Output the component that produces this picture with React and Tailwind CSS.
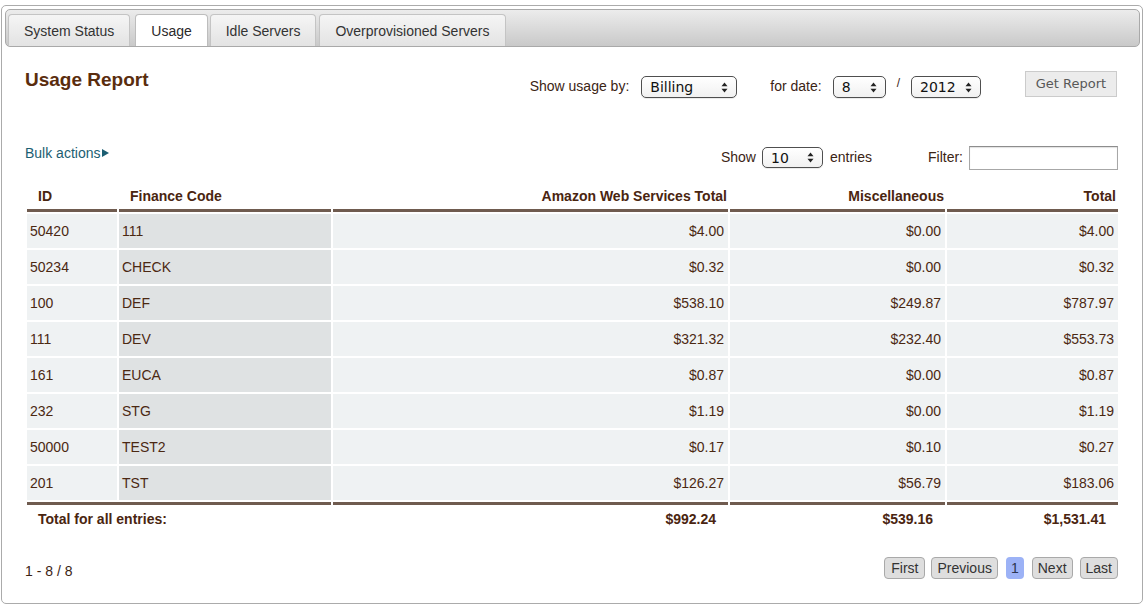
import React from "react";

const rows = [
  ["50420", "111", "$4.00", "$0.00", "$4.00"],
  ["50234", "CHECK", "$0.32", "$0.00", "$0.32"],
  ["100", "DEF", "$538.10", "$249.87", "$787.97"],
  ["111", "DEV", "$321.32", "$232.40", "$553.73"],
  ["161", "EUCA", "$0.87", "$0.00", "$0.87"],
  ["232", "STG", "$1.19", "$0.00", "$1.19"],
  ["50000", "TEST2", "$0.17", "$0.10", "$0.27"],
  ["201", "TST", "$126.27", "$56.79", "$183.06"],
];

function Arrows() {
  return (
    <svg width="7" height="11" viewBox="0 0 7 11" className="shrink-0">
      <path d="M3.5 0.5 L6.5 4.2 L0.5 4.2 Z" fill="#222" />
      <path d="M3.5 10.5 L6.5 6.8 L0.5 6.8 Z" fill="#222" />
    </svg>
  );
}

function Select({ className, label }) {
  return (
    <div
      className={
        "flex items-center justify-between border border-[#4f4f4f] rounded-[5px] bg-gradient-to-b from-white to-[#f1f1f1] font-['DejaVu_Sans',sans-serif] text-[14px] text-[#111] pl-[8px] pr-[8px] shadow-[0_1px_0_rgba(0,0,0,0.08)] " +
        className
      }
    >
      <span className="leading-none">{label}</span>
      <Arrows />
    </div>
  );
}

function Tab({ label, active, className }) {
  return active ? (
    <div className={"h-[33px] px-[15px] border border-b-0 border-[#bdbdbd] rounded-t-[4px] bg-white text-[14px] leading-[32px] text-[#2a2a2a] relative top-[1px] " + className}>
      {label}
    </div>
  ) : (
    <div className={"h-[32px] px-[15px] border border-b-0 border-[#c4c4c4] rounded-t-[4px] bg-gradient-to-b from-[#f5f5f5] to-[#e3e3e3] text-[14px] leading-[32px] text-[#333] " + className}>
      {label}
    </div>
  );
}

export default function App() {
  const txt = "text-[#4b2812]";
  return (
    <div className="w-[1147px] h-[609px] bg-white pt-[5px] font-['Liberation_Sans',Arial,sans-serif]">
      <div className="ml-[1px] w-[1142px] h-[599px] border border-[#ababab] rounded-[5px] pt-[3px]">
        {/* tab bar */}
        <div className="ml-[3px] w-[1135px] h-[38px] border border-[#a9a9a9] rounded-[5px] bg-gradient-to-b from-[#ececec] to-[#c9c9c9] flex items-end pl-[2px] overflow-hidden">
          <Tab label="System Status" className="mr-[5px]" />
          <Tab label="Usage" active className="mr-[2px]" />
          <Tab label="Idle Servers" className="mr-[3px]" />
          <Tab label="Overprovisioned Servers" className="" />
        </div>

        {/* content */}
        <div className="ml-[23px] w-[1095px] pt-[21px]">
          {/* Row A */}
          <div className="flex items-start justify-between h-[29px] pr-[3px]">
            <h1 className="text-[19px] leading-[24px] font-bold text-[#5a2d0e]">Usage Report</h1>
            <div className="flex items-start mt-[3px] text-[14px] text-[#3b2414]">
              <span className="mt-[5px] leading-[21px]">Show usage by:</span>
              <Select className="ml-[12px] mt-[5px] w-[96px] h-[22px]" label="Billing" />
              <span className="ml-[33px] mt-[5px] leading-[21px]">for date:</span>
              <Select className="ml-[11px] mt-[5px] w-[53px] h-[22px]" label="8" />
              <span className="ml-[11px] mt-[2px] leading-[21px] text-[12px]">/</span>
              <Select className="ml-[11px] mt-[5px] w-[70px] h-[22px]" label="2012" />
              <button className="ml-[44px] h-[26px] w-[92px] border border-[#cbcbcb] bg-[#ececec] text-[#585858] font-['DejaVu_Sans',sans-serif] text-[13px] leading-[24px]">
                Get Report
              </button>
            </div>
          </div>

          {/* Row B */}
          <div className="flex items-start justify-between h-[26px] mt-[47px] pr-[2px]">
            <div className="flex items-center leading-[18px] text-[14px] text-[#1b5e72]">
              Bulk actions
              <svg width="7" height="8" viewBox="0 0 7 8" className="ml-[2px]">
                <path d="M0 0 L7 4 L0 8 Z" fill="#1b5e72" />
              </svg>
            </div>
            <div className="flex items-start text-[14px] text-[#3b2414]">
              <span className="mt-[3px] leading-[20px]">Show</span>
              <Select className="ml-[6px] mt-[3px] w-[61px] h-[21px]" label="10" />
              <span className="ml-[7px] mt-[3px] leading-[20px]">entries</span>
              <span className="ml-[56px] mt-[3px] leading-[20px]">Filter:</span>
              <div className="ml-[6px] mt-[2px] w-[149px] h-[24px] border border-[#a7a7a7] border-t-[#8d8d8d] bg-white shadow-[inset_0_1px_1px_rgba(0,0,0,0.12)]"></div>
            </div>
          </div>

          {/* Table */}
          <table className="mt-[12px] w-[1095px] table-fixed border-separate border-spacing-[2px] text-[14px]">
            <colgroup>
              <col className="w-[90px]" />
              <col className="w-[212px]" />
              <col className="w-[395px]" />
              <col className="w-[215px]" />
              <col className="w-[171px]" />
            </colgroup>
            <thead>
              <tr className="font-bold text-[#4a2510]">
                <th className="text-left pl-[11px] pt-[4px] pb-[4px] leading-[17px] border-b-[3px] border-[#6f5b4f]">ID</th>
                <th className="text-left pl-[11px] pt-[4px] pb-[4px] leading-[17px] border-b-[3px] border-[#6f5b4f]">Finance Code</th>
                <th className="text-right pr-[1px] pt-[4px] pb-[4px] leading-[17px] border-b-[3px] border-[#6f5b4f]">Amazon Web Services Total</th>
                <th className="text-right pr-[1px] pt-[4px] pb-[4px] leading-[17px] border-b-[3px] border-[#6f5b4f]">Miscellaneous</th>
                <th className="text-right pr-[2px] pt-[4px] pb-[4px] leading-[17px] border-b-[3px] border-[#6f5b4f]">Total</th>
              </tr>
            </thead>
            <tbody className={txt}>
              {rows.map((r) => (
                <tr key={r[0] + r[1]}>
                  <td className="h-[34px] pl-[3px] bg-[#eff2f3] leading-[17px]">{r[0]}</td>
                  <td className="h-[34px] pl-[3px] bg-[#dfe2e3] leading-[17px]">{r[1]}</td>
                  <td className="h-[34px] pr-[4px] text-right bg-[#eff2f3] leading-[17px]">{r[2]}</td>
                  <td className="h-[34px] pr-[4px] text-right bg-[#eff2f3] leading-[17px]">{r[3]}</td>
                  <td className="h-[34px] pr-[4px] text-right bg-[#eff2f3] leading-[17px]">{r[4]}</td>
                </tr>
              ))}
            </tbody>
            <tfoot>
              <tr className="font-bold text-[#4a2510]">
                <td colSpan={2} className="pl-[11px] pt-[6px] pb-[4px] leading-[17px] border-t-[3px] border-[#6f5b4f]">Total for all entries:</td>
                <td className="text-right pr-[12px] pt-[6px] pb-[4px] leading-[17px] border-t-[3px] border-[#6f5b4f]">$992.24</td>
                <td className="text-right pr-[12px] pt-[6px] pb-[4px] leading-[17px] border-t-[3px] border-[#6f5b4f]">$539.16</td>
                <td className="text-right pr-[12px] pt-[6px] pb-[4px] leading-[17px] border-t-[3px] border-[#6f5b4f]">$1,531.41</td>
              </tr>
            </tfoot>
          </table>

          {/* Pagination */}
          <div className="flex items-start justify-between mt-[23px] pr-[2px]">
            <span className="mt-[3px] leading-[22px] text-[14px] text-[#3b2414]">1 - 8 / 8</span>
            <div className="flex items-start text-[14px] text-[#333]">
              <div className="h-[22px] px-[6px] border border-[#a9a9a9] rounded-[4px] bg-[#dedede] leading-[21px]">First</div>
              <div className="ml-[6px] h-[22px] px-[5px] border border-[#a9a9a9] rounded-[4px] bg-[#dedede] leading-[21px]">Previous</div>
              <div className="ml-[8px] h-[22px] px-[5px] rounded-[4px] bg-[#9cb2f6] leading-[22px] text-[#2c3550]">1</div>
              <div className="ml-[8px] h-[22px] px-[5px] border border-[#a9a9a9] rounded-[4px] bg-[#dedede] leading-[21px]">Next</div>
              <div className="ml-[7px] h-[22px] px-[5px] border border-[#a9a9a9] rounded-[4px] bg-[#dedede] leading-[21px]">Last</div>
            </div>
          </div>
        </div>
      </div>
    </div>
  );
}
